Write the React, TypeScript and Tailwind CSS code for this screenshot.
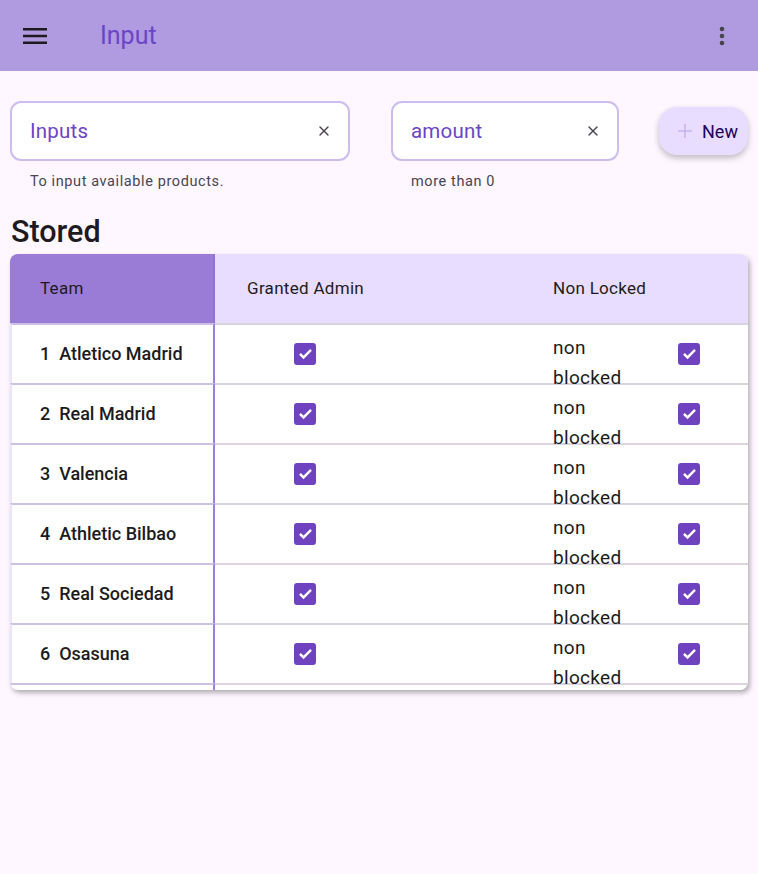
import { X, Plus } from "lucide-react";

const teams = [
  "Atletico Madrid",
  "Real Madrid",
  "Valencia",
  "Athletic Bilbao",
  "Real Sociedad",
  "Osasuna",
];

const Check = () => (
  <span className="flex h-[22px] w-[22px] items-center justify-center rounded-[3px] bg-[#6f43c0]">
    <svg viewBox="0 0 24 24" className="h-[19px] w-[19px]" fill="none" stroke="white" strokeWidth="3">
      <path d="M5 12.5l4.5 4.5L19 7.5" />
    </svg>
  </span>
);

const Field = ({ label, helper, width }: { label: string; helper: string; width: string }) => (
  <div className={`flex shrink-0 flex-col ${width}`}>
    <div className="flex h-[60px] items-center justify-between rounded-[11px] border-2 border-[#cdbdec] bg-white pl-[18px] pr-[16px]">
      <span className="text-[20.5px] tracking-[0.2px] text-[#6b45c6]">{label}</span>
      <X size={16} strokeWidth={2} className="text-[#49454f]" />
    </div>
    <span className="mt-[10px] pl-[20px] text-[14.5px] tracking-[0.6px] text-[#49454f]">{helper}</span>
  </div>
);

export default function App() {
  return (
    <div className="min-h-screen bg-[#fef7ff] font-['Roboto',sans-serif] text-[#1d1b20]">
      {/* app bar */}
      <header className="flex h-[71px] items-center bg-[#b09ae0] pl-[23px] pr-[33px]">
        <svg viewBox="0 0 24 24" className="h-[24px] w-[24px]" fill="#1d1b20">
          <path d="M0 4h24v2.4H0zM0 10.8h24v2.4H0zM0 17.6h24v2.4H0z" />
        </svg>
        <h1 className="ml-[53px] flex-1 text-[25px] text-[#6b45c6]">Input</h1>
        <svg viewBox="0 0 6 24" className="h-[24px] w-[6px]" fill="#49454f">
          <circle cx="3" cy="5" r="2.3" />
          <circle cx="3" cy="12" r="2.3" />
          <circle cx="3" cy="19" r="2.3" />
        </svg>
      </header>

      <main className="px-[10px]">
        {/* inputs row */}
        <div className="mt-[30px] flex items-start">
          <Field label="Inputs" helper="To input available products." width="w-[340px]" />
          <div className="ml-[41px]">
            <Field label="amount" helper="more than 0" width="w-[228px]" />
          </div>
          <button className="ml-[40px] mt-[6px] flex h-[48px] w-[89px] shrink-0 items-center gap-[6px] rounded-[18px] bg-[#e9ddff] pl-[15px] shadow-[0_3px_6px_rgba(0,0,0,0.25)]">
            <Plus size={22} strokeWidth={1.6} className="text-[#c5b3ea]" />
            <span className="text-[18px] text-[#21005d]">New</span>
          </button>
        </div>

        <h2 className="mt-[21px] pl-[1px] text-[30.5px] font-medium leading-[36px]">Stored</h2>

        {/* table */}
        <div className="mt-[4px] h-[436px] w-[738px] overflow-hidden rounded-[8px] bg-white shadow-[2px_3px_5px_rgba(0,0,0,0.3)]">
          <div className="flex h-[69px] bg-[#e9ddff] text-[17px] tracking-[0.3px]">
            <div className="flex w-[205px] items-center border-r-2 border-[#9272d2] bg-[#9a7bd6] pl-[30px]">Team</div>
            <div className="flex w-[306px] items-center pl-[32px]">Granted Admin</div>
            <div className="flex items-center pl-[32px]">Non Locked</div>
          </div>
          {teams.map((team, i) => (
            <div key={team} className="flex h-[60px] border-t-2 border-[#dad4e0]">
              <div className="-mt-[2px] flex w-[205px] items-center border-t-2 border-l-2 border-r-2 border-t-[#ccc0e6] border-l-[#ece4fb] border-r-[#9c7fdc] pl-[28px] text-[18px] font-medium">
                {i + 1}&nbsp;&nbsp;{team}
              </div>
              <div className="flex w-[306px] items-center pl-[79px]">
                <Check />
              </div>
              <div className="flex flex-1 pl-[32px]">
                <span className="w-[125px] pt-[8px] text-[19px] leading-[30px] tracking-[0.3px]">
                  non
                  <br />
                  blocked
                </span>
                <div className="flex items-center">
                  <Check />
                </div>
              </div>
            </div>
          ))}
          {/* next row peeking from under the scroll edge */}
          <div className="flex h-[60px] border-t-2 border-[#dad4e0]">
            <div className="-mt-[2px] w-[205px] border-t-2 border-l-2 border-r-2 border-t-[#ccc0e6] border-l-[#ece4fb] border-r-[#9c7fdc]" />
          </div>
        </div>
      </main>
    </div>
  );
}
